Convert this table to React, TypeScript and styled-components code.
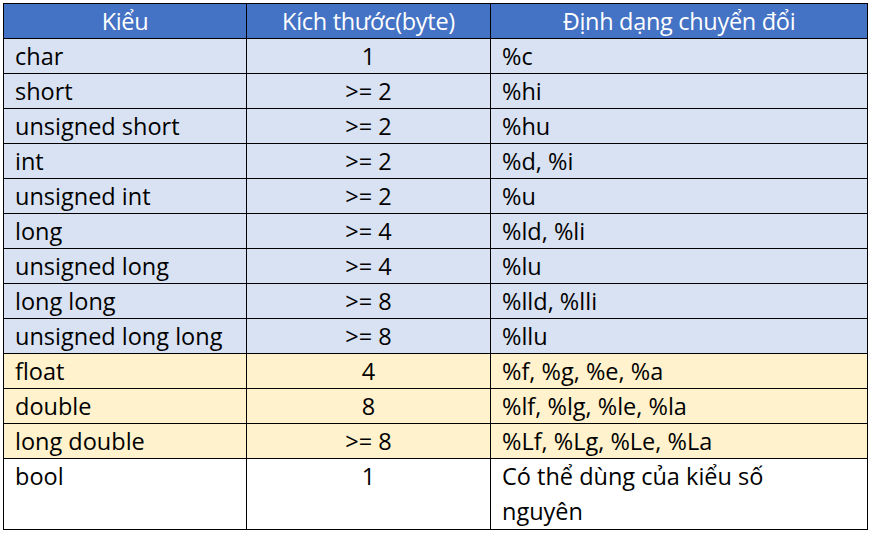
import React from "react";
import styled, { createGlobalStyle } from "styled-components";

const GlobalStyle = createGlobalStyle`
  html, body {
    margin: 0;
    padding: 0;
    background: #ffffff;
  }
  body {
    font-family: "Open Sans", "Noto Sans", Arial, sans-serif;
  }
`;

type Tone = "blue" | "yellow" | "white";

const toneColors: Record<Tone, string> = {
  blue: "#d9e2f3",
  yellow: "#fff2cc",
  white: "#ffffff",
};

const Page = styled.div`
  padding: 3px 0 0 3px;
`;

const Table = styled.table`
  border-collapse: collapse;
  table-layout: fixed;
  width: 864px;
  font-size: 23.5px;
  color: #000000;
`;

const HeadCell = styled.th`
  background: #4472c4;
  color: #ffffff;
  font-weight: 400;
  text-align: center;
  height: 34px;
  padding: 0;
  border: 1.5px solid #000000;
  line-height: 34px;
  letter-spacing: -0.3px;
`;

const Row = styled.tr<{ $tone: Tone }>`
  background: ${(p) => toneColors[p.$tone]};
`;

const Cell = styled.td<{ $center?: boolean; $tall?: boolean }>`
  border: 1.5px solid #000000;
  height: ${(p) => (p.$tall ? "69px" : "34px")};
  padding: ${(p) => (p.$center ? "0" : "0 0 0 11px")};
  text-align: ${(p) => (p.$center ? "center" : "left")};
  vertical-align: ${(p) => (p.$tall ? "top" : "middle")};
  line-height: ${(p) => (p.$tall ? "35px" : "34px")};
  white-space: nowrap;
`;

const rows: { type: string; size: string; format: string; tone: Tone }[] = [
  { type: "char", size: "1", format: "%c", tone: "blue" },
  { type: "short", size: ">= 2", format: "%hi", tone: "blue" },
  { type: "unsigned short", size: ">= 2", format: "%hu", tone: "blue" },
  { type: "int", size: ">= 2", format: "%d, %i", tone: "blue" },
  { type: "unsigned int", size: ">= 2", format: "%u", tone: "blue" },
  { type: "long", size: ">= 4", format: "%ld, %li", tone: "blue" },
  { type: "unsigned long", size: ">= 4", format: "%lu", tone: "blue" },
  { type: "long long", size: ">= 8", format: "%lld, %lli", tone: "blue" },
  { type: "unsigned long long", size: ">= 8", format: "%llu", tone: "blue" },
  { type: "float", size: "4", format: "%f, %g, %e, %a", tone: "yellow" },
  { type: "double", size: "8", format: "%lf, %lg, %le, %la", tone: "yellow" },
  { type: "long double", size: ">= 8", format: "%Lf, %Lg, %Le, %La", tone: "yellow" },
];

export default function App() {
  return (
    <>
      <GlobalStyle />
      <Page>
        <Table>
          <colgroup>
            <col style={{ width: 243 }} />
            <col style={{ width: 244 }} />
            <col style={{ width: 377 }} />
          </colgroup>
          <thead>
            <tr>
              <HeadCell>Kiểu</HeadCell>
              <HeadCell>Kích thước(byte)</HeadCell>
              <HeadCell>Định dạng chuyển đổi</HeadCell>
            </tr>
          </thead>
          <tbody>
            {rows.map((r) => (
              <Row key={r.type} $tone={r.tone}>
                <Cell>{r.type}</Cell>
                <Cell $center>{r.size}</Cell>
                <Cell>{r.format}</Cell>
              </Row>
            ))}
            <Row $tone="white">
              <Cell $tall>bool</Cell>
              <Cell $tall $center>
                1
              </Cell>
              <Cell $tall>
                Có thể dùng của kiểu số
                <br />
                nguyên
              </Cell>
            </Row>
          </tbody>
        </Table>
      </Page>
    </>
  );
}
